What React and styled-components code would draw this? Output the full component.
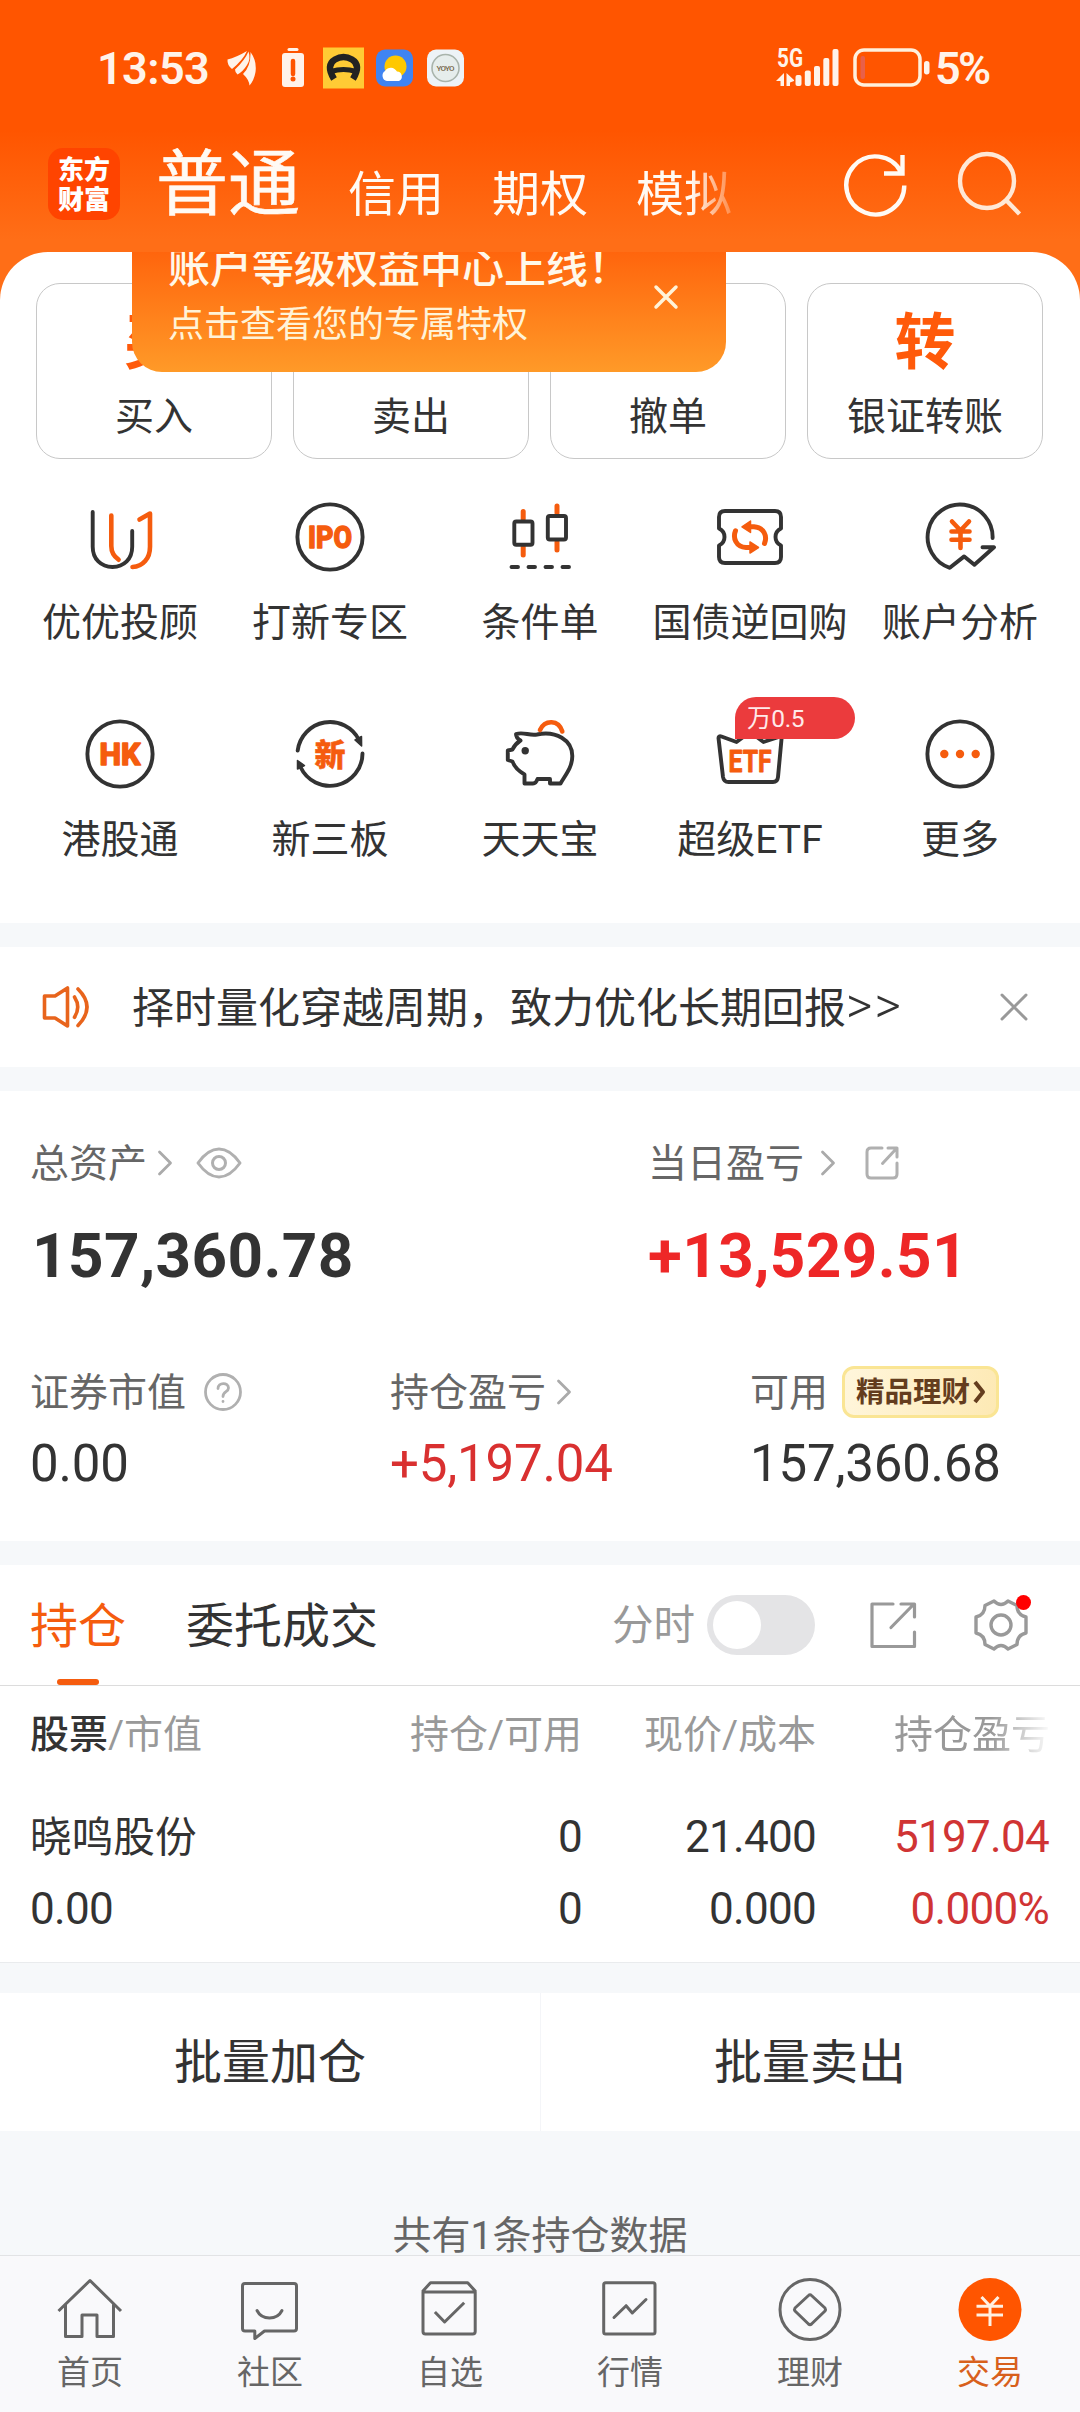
import React from "react";
import styled, { createGlobalStyle } from "styled-components";

const INK = "#333333";
const ORANGE = "#f55c0e";

const Global = createGlobalStyle`
  * { box-sizing: border-box; }
  body {
    margin: 0;
    background: #f6f8fa;
    font-family: Roboto, "Noto Sans CJK SC", sans-serif;
    color: #333;
  }
  svg { display: block; flex: none; overflow: visible; }
`;

const Page = styled.div`
  width: 1080px;
  height: 2412px;
  display: flex;
  flex-direction: column;
  overflow: hidden;
`;

/* ---------- header ---------- */
const Hero = styled.section`
  background: linear-gradient(#ff5500 0, #ff5500 130px, #ff6e17 240px);
`;

const StatusBar = styled.div`
  height: 136px;
  padding: 0 91px 0 97px;
  display: flex;
  align-items: center;
  justify-content: space-between;
  color: #fff3ea;
`;

const StatusGroup = styled.div`
  display: flex;
  align-items: center;
`;

const Clock = styled.span`
  width: 130px;
  font-size: 45px;
  font-weight: 600;
  line-height: 50px;
  letter-spacing: -0.6px;
  padding-top: 1px;
`;

const Percent = styled.span`
  font-size: 45px;
  font-weight: 600;
  line-height: 50px;
  width: 54px;
  margin-left: 5px;
  padding-top: 1px;
  letter-spacing: -2.6px;
`;

const TopNav = styled.div`
  height: 116px;
  padding: 0 58px 20px 48px;
  display: flex;
  align-items: center;
`;

const Logo = styled.div`
  width: 72px;
  height: 72px;
  border-radius: 15px;
  background: #ff4400;
  color: #fff;
  font-family: "Noto Sans CJK SC", sans-serif;
  font-weight: 900;
  font-size: 26px;
  line-height: 30px;
  text-align: center;
  padding-top: 5px;
`;

const TabStrip = styled.div`
  width: 584px;
  margin-left: 36px;
  display: flex;
  align-items: center;
  gap: 48px;
  overflow: hidden;
  mask-image: linear-gradient(90deg, #000 535px, transparent 590px);
`;

const TopTab = styled.span`
  flex: none;
  color: #fffaf4;
  font-size: ${(p) => (p.$active ? 72 : 48)}px;
  font-weight: 400;
  -webkit-text-stroke: ${(p) => (p.$active ? "0.6px #fffaf4" : "0")};
  line-height: 84px;
  padding-top: ${(p) => (p.$active ? 2 : 22)}px;
`;

const HeadIcons = styled.div`
  margin-left: 104px;
  display: flex;
  gap: 50px;
`;

/* ---------- main card ---------- */
const Card = styled.div`
  position: relative;
  height: 671px;
  padding-top: 31px;
  background: #fff;
  border-radius: 48px 48px 0 0;
`;

const Actions = styled.div`
  display: grid;
  grid-template-columns: repeat(4, 236px);
  gap: 21px;
  padding: 0 36px;
`;

const Action = styled.div`
  height: 176px;
  border: 1px solid #c8c8c8;
  border-radius: 24px;
  display: flex;
  flex-direction: column;
  align-items: center;
  padding-top: 21px;
`;

const ActionGlyph = styled.span`
  font-size: 61px;
  font-weight: 700;
  line-height: 76px;
  color: #ff5a0a;
`;

const Label = styled.span`
  font-size: 39px;
  line-height: 50px;
  white-space: nowrap;
`;

const ActionLabel = styled(Label)`
  margin-top: 11px;
`;

const Banner = styled.div`
  position: absolute;
  top: 0;
  left: 132px;
  width: 594px;
  height: 120px;
  overflow: hidden;
  padding: 0 0 0 36px;
  border-radius: 0 0 30px 30px;
  background: linear-gradient(#ff650d, #ff9a28);
  color: #fff8ea;
`;

const BannerTitle = styled.div`
  margin-top: -11px;
  font-size: 42px;
  font-weight: 500;
  line-height: 56px;
`;

const BannerText = styled.div`
  font-size: 36px;
  line-height: 56px;
  color: #fff3d8;
`;

const BannerClose = styled.svg`
  position: absolute;
  left: 522px;
  top: 33px;
`;

const Functions = styled.div`
  display: grid;
  grid-template-columns: repeat(5, 210px);
  row-gap: 71px;
  padding: 42px 15px 0;
`;

const Fn = styled.div`
  position: relative;
  display: flex;
  flex-direction: column;
  align-items: center;
  gap: 25px;
  height: 146px;
`;

const FnBadge = styled.span`
  position: absolute;
  left: 90px;
  top: -21px;
  width: 120px;
  height: 42px;
  padding-left: 12px;
  border-radius: 21px 21px 21px 0;
  background: #eb3b3d;
  color: #ffeaea;
  font-size: 24.5px;
  line-height: 43px;
  letter-spacing: -0.3px;
`;

/* ---------- notice ---------- */
const Notice = styled.section`
  height: 120px;
  margin-top: 24px;
  padding: 0 52px 0 42px;
  background: #fff;
  display: flex;
  align-items: center;
`;

const NoticeText = styled.span`
  flex: 1;
  margin-left: 42px;
  padding-top: 3px;
  font-size: 42px;
  line-height: 60px;
`;

const More = styled.span`
  font-size: 51px;
  font-weight: 300;
  letter-spacing: 2px;
  line-height: 50px;
`;

/* ---------- assets ---------- */
const Assets = styled.section`
  height: 450px;
  margin-top: 24px;
  padding: 42px 0 0 30px;
  background: #fff;
`;

const AssetTop = styled.div`
  display: grid;
  grid-template-columns: 618px 1fr;
  margin-bottom: 67px;
`;

const AssetBottom = styled.div`
  display: grid;
  grid-template-columns: 360px 360px 1fr;
`;

const AssetHead = styled.div`
  height: 60px;
  display: flex;
  align-items: center;
  font-size: 39px;
  color: #666;
`;

const HeadText = styled.span`
  line-height: 58px;
  padding-top: 2px;
`;

const Total = styled.div`
  height: 80px;
  margin-top: 22px;
  padding-left: ${(p) => (p.$up ? 0 : 2)}px;
  padding-top: 1px;
  font-size: 62px;
  font-weight: 700;
  line-height: 80px;
  letter-spacing: 0.4px;
  color: ${(p) => (p.$up ? "#ee2727" : INK)};
`;

const Amount = styled.div`
  margin-top: 12px;
  font-size: 51px;
  line-height: 60px;
  letter-spacing: -0.2px;
  color: ${(p) => (p.$up ? "#d93030" : INK)};
`;

const Gap = styled.span`
  flex: none;
  width: ${(p) => p.$w}px;
`;

const GoldTag = styled.span`
  width: 157px;
  height: 52px;
  margin-left: 14px;
  padding-left: 11px;
  display: flex;
  align-items: center;
  gap: 4px;
  border: 3px solid #fae594;
  border-radius: 12px;
  background: linear-gradient(100deg, #fff6dc, #fde9b4);
  color: #643d1e;
  font-size: 28.5px;
  font-weight: 700;
  line-height: 46px;
`;

const GoldText = styled.span`
  padding-top: 2px;
`;

/* ---------- holdings ---------- */
const Holdings = styled.section`
  height: 397px;
  margin-top: 24px;
  background: #fff;
`;

const HoldBar = styled.div`
  height: 121px;
  padding: 0 51px 0 30px;
  border-bottom: 1px solid #dcdcdc;
  display: flex;
  align-items: center;
`;

const HoldTab = styled.span`
  height: 120px;
  margin-right: 60px;
  display: flex;
  flex-direction: column;
  align-items: center;
  font-size: 48px;
  line-height: 123px;
  color: ${(p) => (p.$active ? ORANGE : INK)};
  &::after {
    content: "";
    flex: none;
    width: 42px;
    height: 6px;
    margin-top: -9px;
    border-radius: 3px;
    background: ${(p) => (p.$active ? ORANGE : "transparent")};
  }
`;

const Muted = styled.span`
  margin-left: auto;
  padding-top: 2px;
  font-size: 41.5px;
  line-height: 60px;
  color: #999;
`;

const Toggle = styled.span`
  width: 108px;
  height: 60px;
  margin: 0 54px 0 12px;
  padding: 6px;
  border-radius: 30px;
  background: #e4e4e6;
  &::before {
    content: "";
    display: block;
    width: 48px;
    height: 48px;
    border-radius: 50%;
    background: #fff;
  }
`;

const Table = styled.div`
  display: grid;
  grid-template-columns: 352px 200px 234px 234px;
  grid-template-rows: 96px 18px 72px 72px;
  padding-left: 30px;
`;

const Th = styled.span`
  font-size: 39px;
  line-height: 99px;
  color: #999;
  white-space: nowrap;
  text-align: ${(p) => (p.$first ? "left" : "right")};
  b { font-weight: 500; color: ${INK}; }
`;

const ThFade = styled(Th)`
  overflow: hidden;
  padding-left: 78px;
  text-align: left;
  mask-image: linear-gradient(90deg, #000 175px, transparent 236px);
`;

const Spacer = styled.span`
  grid-column: 1 / -1;
`;

const Td = styled.span`
  font-size: 44px;
  line-height: 74px;
  letter-spacing: -0.7px;
  padding-right: ${(p) => (p.$up ? 1 : 0)}px;
  text-align: ${(p) => (p.$first ? "left" : "right")};
  color: ${(p) => (p.$up ? "#d03434" : INK)};
`;

const StockName = styled(Td)`
  font-size: 41.7px;
  line-height: 75px;
  letter-spacing: 0;
`;

const Batch = styled.section`
  height: 169px;
  padding-top: 30px;
  background: #f6f8fa;
  border-top: 1px solid #e9ebed;
  display: flex;
`;

const BatchButton = styled.div`
  width: 540px;
  background: #fff;
  text-align: center;
  font-size: 48px;
  line-height: 140px;
  & + & { box-shadow: inset 1px 0 #f4f5f8; }
`;

const Footnote = styled.div`
  height: 124px;
  padding-top: 86px;
  text-align: center;
  font-size: 39px;
  line-height: 38px;
  color: #666;
`;

const BottomNav = styled.nav`
  height: 157px;
  border-top: 1px solid #e2e3e5;
  background: #f9f9fb;
  display: grid;
  grid-template-columns: repeat(6, 1fr);
`;

const NavItem = styled.div`
  display: flex;
  flex-direction: column;
  align-items: center;
  padding-top: 21px;
  gap: 8px;
  font-size: 33px;
  line-height: 44px;
  color: ${(p) => (p.$active ? "#d8601c" : "#666")};
`;

/* ---------- icons ---------- */
const Svg = ({ w, h = w, sw = 4, c = INK, children, ...rest }) => (
  <svg width={w} height={h} viewBox={`0 0 ${w} ${h}`} fill="none" stroke={c} strokeWidth={sw}
    strokeLinecap="round" strokeLinejoin="round" {...rest}>{children}</svg>
);

const Glyph = ({ x = 36, y, size, len, children, weight = 700, sw = 1.4 }) => (
  <text x={x} y={y} fontSize={size} fontWeight={weight} textAnchor="middle" textLength={len}
    lengthAdjust="spacingAndGlyphs" fill={ORANGE} stroke={ORANGE} strokeWidth={sw}>{children}</text>
);

const Ring = () => <circle cx="36" cy="36" r="32.6" />;

const icons = {
  uu: (
    <>
      <path d="M8.7 11V45.7C8.7 58 17 66 28.5 66S48.2 58 48.2 45.7V30" />
      <g stroke={ORANGE} strokeWidth="4.6">
        <path d="M27.3 14.5V45C27.3 51.5 30 55.5 34.6 58.7" />
        <path d="M48.5 66C59 65.5 66 57.5 66 45.7V12.5L55.5 18.5" />
      </g>
    </>
  ),
  ipo: <><Ring /><Glyph y="47" size="31" len="44" weight="800">IPO</Glyph></>,
  candle: (
    <>
      <g stroke={ORANGE} strokeWidth="5">
        <path d="M19.2 10.5V18M19.2 46V54M53 5V12M53 41V49" />
      </g>
      <rect x="10.3" y="20.5" width="18.2" height="23.2" rx="2" />
      <rect x="43.8" y="15" width="18.2" height="23.5" rx="2" />
      <path d="M7.5 66H14M24.5 66H31M41.5 66H48M58.5 66H65" />
    </>
  ),
  ticket: (
    <>
      <path d="M11 10H61Q67 10 67 16V27.5Q61.5 30 61.5 36T67 44.5V56Q67 62 61 62H11Q5 62 5 56V44.5Q10.5 42 10.5 36T5 27.5V16Q5 10 11 10Z" />
      <g stroke={ORANGE} strokeWidth="5">
        <path d="M36 25.8H40C50 26.5 53.5 35 50.5 42.5" />
        <path d="M36 46.5H32C22 46 18.5 37 21.5 29.8" />
      </g>
      <g fill={ORANGE} stroke={ORANGE} strokeWidth="1.5">
        <path d="M28 25.8L36.5 20V31.5ZM44.5 46.5L36 41V52Z" />
      </g>
    </>
  ),
  analysis: (
    <>
      <path d="M68.6 37A32.5 32.5 0 1 0 25.8 66.8L40.2 55.4L50.4 63.7L70 46.3H58.5" />
      <path d="M28 20.5L36.5 29.5L45 20.5M36.5 30V47M27.5 30.5H45.5M27.5 38.8H45.5" stroke={ORANGE} strokeWidth="4.6" />
    </>
  ),
  hk: <><Ring /><Glyph y="47" size="31" len="41" weight="800">HK</Glyph></>,
  neo: (
    <>
      <path d="M3.7 32.5A32.5 32.5 0 0 1 65 22M68.5 35.5A32.5 32.5 0 0 1 6.5 49" />
      <path d="M67.6 28L61 22L67.5 18.5ZM3.5 42.5L3.5 51L10.5 47.5Z" fill={INK} strokeWidth="1.5" />
      <Glyph y="47.5" size="31" weight="900" sw="0.5">新</Glyph>
    </>
  ),
  pig: (
    <>
      <path d="M12 16C20 13.5 25 18 33 16.5C52 12.5 68.3 22 68.3 38C68.3 50 60.5 58 56.5 65.5H46V61H33.5Q32 65.5 29 65.5H20.5V56.5Q11 51 8.5 43.5L3.8 42V32.5L8.5 31.5Q11 26 16.5 22.5Q12 20 12 16Z" />
      <path d="M36 12C41 1.5 54.5 1.5 58.3 13.5" stroke={ORANGE} strokeWidth="4.6" />
      <circle cx="21.2" cy="32.7" r="3.7" fill={INK} stroke="none" />
    </>
  ),
  etf: (
    <>
      <path d="M4.5 20Q4.5 17.5 7.5 18.5L22.5 24L36 14L49.5 24L67.8 18L64 59Q63.5 64 59 64H14.5Q9.8 64 9 59Z" />
      <Glyph y="53.5" size="31" len="43" sw="0.9">ETF</Glyph>
    </>
  ),
  more: (
    <>
      <Ring />
      <g fill={ORANGE} stroke="none">
        <circle cx="20.3" cy="36" r="4.2" /><circle cx="36" cy="36" r="4.2" /><circle cx="51.7" cy="36" r="4.2" />
      </g>
    </>
  ),
};

const functions = [
  ["uu", "优优投顾"], ["ipo", "打新专区"], ["candle", "条件单"], ["ticket", "国债逆回购"], ["analysis", "账户分析"],
  ["hk", "港股通"], ["neo", "新三板"], ["pig", "天天宝"], ["etf", "超级ETF", "万0.5"], ["more", "更多"],
];

const actions = [["买", "买入"], ["卖", "卖出"], ["撤", "撤单"], ["转", "银证转账"]];

const navIcons = {
  home: <><path d="M1.5 34L33 3.5L64 34" strokeLinecap="butt" /><path d="M8.5 28V59.5H25V38H40V59.5H56.5V28" /></>,
  talk: <><path d="M8 6.5H57Q59.5 6.5 59.5 9V51.5Q59.5 54 57 54H27.5L17.8 61.5V54H8Q5.5 54 5.5 51.5V9Q5.5 6.5 8 6.5Z" /><path d="M20 33.5C25 43.5 40 43.5 45 33.5" /></>,
  pick: <><path d="M6 15V54.5Q6 57 8.5 57H55.7Q58.2 57 58.2 54.5V15ZM6 14L13.5 5.7H50.7L58.2 14" /><path d="M17.9 35L27.6 45L47.2 25.7" strokeLinecap="butt" /></>,
  chart: <><rect x="6.7" y="5.7" width="51.3" height="51.3" rx="2" /><path d="M17 40.5L29.1 28.7L35.3 36L49 22.5" /></>,
  wealth: <><circle cx="33" cy="32.5" r="30" /><path d="M31.5 18.5L18 31Q17 32.5 18 34L31.5 47Q33 48.3 34.5 47L48 34Q49 32.5 48 31L34.5 18.5Q33 17 31.5 18.5Z" /></>,
  trade: <><circle cx="33" cy="32.5" r="31.5" fill="#ff5500" stroke="none" /><path d="M24.5 20L33 29L41.5 20M33 29V49M19.5 29.3H46M19.5 38H46" stroke="#fff0e2" strokeLinecap="butt" /></>,
};

const navItems = [
  ["home", "首页"], ["talk", "社区"], ["pick", "自选"], ["chart", "行情"], ["wealth", "理财"], ["trade", "交易"],
];

const Chevron = () => <Svg w={14} h={24} sw={2.8} c="#aaa"><path d="M1.5 1L12.5 12L1.5 23" /></Svg>;

const StatusIcons = () => (
  <Svg w={238} h={42} c="none">
    <g fill="#fff3ea">
      <path d="M0.5 12.5Q9 10.5 20 4Q16 13 5 22Q0 18 0.5 12.5Z" />
      <path d="M8 22.5Q18 13 21.5 4.5Q24 12 20 18Q16 24.5 10.5 27.5Q8 25.5 8 22.5Z" />
      <path d="M16 27Q24 19 23.5 5Q30 14 28.5 25Q27 33.5 22.5 38.5Q22 32.5 16 27Z" />
      <rect x="55" y="6" width="22" height="34" rx="3" />
      <rect x="60.5" y="1" width="11" height="3" rx="1.5" />
    </g>
    <path d="M66 14V27" stroke="#ff5500" strokeWidth="4.5" />
    <circle cx="66" cy="32" r="2.5" fill="#ff5500" />
    <rect x="96" y="0.5" width="41" height="41" fill="#ffcb35" />
    <path d="M107 32Q98.5 18 108 12.5Q116.5 7.5 125 12.5Q134.5 18 126 32" stroke="#222" strokeWidth="6.5" strokeLinecap="butt" />
    <path d="M104 24.5Q116.5 20.5 129 24.5" stroke="#222" strokeWidth="5" />
    <rect x="149" y="2.5" width="37" height="37" rx="9" fill="#3f84f2" />
    <circle cx="168.5" cy="19.5" r="11" fill="#ffc800" />
    <path d="M160 34A5.5 5.5 0 0 1 158 24A7 7 0 0 1 170 24.5A5 5 0 0 1 172 34Z" fill="#fff" />
    <rect x="200" y="2.5" width="37" height="37" rx="9" fill="#edf3f7" />
    <circle cx="218.5" cy="21" r="13.5" fill="#e6edec" stroke="#a9b4ac" strokeWidth="1.6" />
    <text x="218.5" y="24" fontSize="8" fontWeight="500" textAnchor="middle" textLength="18" fill="#75664a">YOYO</text>
  </Svg>
);

const SignalIcons = () => (
  <Svg w={154} h={42} c="none">
    <text x="1" y="20" fontSize="26" fontWeight="700" textLength="26" lengthAdjust="spacingAndGlyphs" fill="#fff3ea">5G</text>
    <g fill="#fff3ea">
      <path d="M0 34L8 26V39H4.5V34ZM10.5 26L18 33V34L14 35.5V39H10.5Z" />
      <rect x="19.5" y="28" width="6" height="11" rx="2" />
      <rect x="28.8" y="23.5" width="6" height="15.5" rx="2" />
      <rect x="38" y="19" width="6" height="20" rx="2" />
      <rect x="47.3" y="11" width="6" height="28" rx="2" />
      <rect x="56.5" y="2" width="6" height="37" rx="2" />
      <rect x="148" y="14" width="5.5" height="13.5" rx="2.7" />
    </g>
    <rect x="79" y="3" width="65" height="35" rx="9" stroke="#fff0dc" strokeWidth="3.5" />
    <rect x="84.5" y="9" width="4.5" height="23" rx="2" fill="#e8604a" />
  </Svg>
);

export default function App() {
  return (
    <>
      <Global />
      <Page>
        <Hero>
          <StatusBar>
            <StatusGroup><Clock>13:53</Clock><StatusIcons /></StatusGroup>
            <StatusGroup><SignalIcons /><Percent>5%</Percent></StatusGroup>
          </StatusBar>
          <TopNav>
            <Logo>东方<br />财富</Logo>
            <TabStrip>
              <TopTab $active>普通</TopTab>
              <TopTab>信用</TopTab>
              <TopTab>期权</TopTab>
              <TopTab>模拟</TopTab>
            </TabStrip>
            <HeadIcons>
              <Svg w={64} c="#fffaf4" sw={4.4} strokeLinecap="butt" strokeLinejoin="miter">
                <path d="M60.3 33.5A29 29 0 1 1 57 20M58.5 3V21.5H40" />
              </Svg>
              <Svg w={64} c="#ffe8d6" sw={4.4} strokeLinecap="butt">
                <circle cx="29" cy="29" r="27" /><path d="M47.5 47.5L61.5 62" />
              </Svg>
            </HeadIcons>
          </TopNav>
          <Card>
            <Actions>
              {actions.map(([g, t]) => (
                <Action key={t}><ActionGlyph>{g}</ActionGlyph><ActionLabel>{t}</ActionLabel></Action>
              ))}
            </Actions>
            <Functions>
              {functions.map(([id, t, badge]) => (
                <Fn key={id}>
                  <Svg w={72} sw={3.9}>{icons[id]}</Svg>
                  <Label>{t}</Label>
                  {badge && <FnBadge>{badge}</FnBadge>}
                </Fn>
              ))}
            </Functions>
            <Banner>
              <BannerTitle>账户等级权益中心上线！</BannerTitle>
              <BannerText>点击查看您的专属特权</BannerText>
              <BannerClose width="24" height="24" fill="none" stroke="#fff3d8" strokeWidth="3.5" strokeLinecap="round">
                <path d="M2 2L22 22M22 2L2 22" />
              </BannerClose>
            </Banner>
          </Card>
        </Hero>

        <Notice>
          <Svg w={48} h={42} sw={3.6} c="#e8641c">
            <path d="M2.5 10H13L25.5 2V40L13 32H2.5ZM32.5 11Q39 21 32.5 31.3M36 3Q54 21 36 39.5" />
          </Svg>
          <NoticeText>择时量化穿越周期，致力优化长期回报<More>&gt;&gt;</More></NoticeText>
          <Svg w={28} sw={3} c="#999"><path d="M2 2L26 26M26 2L2 26" /></Svg>
        </Notice>

        <Assets>
          <AssetTop>
            <div>
              <AssetHead>
                <HeadText>总资产</HeadText><Gap $w={11} /><Chevron /><Gap $w={24} />
                <Svg w={46} h={32} sw={3} c="#b0b0b0">
                  <path d="M2 16Q12 2 23 2T44 16Q34 30 23 30T2 16Z" /><circle cx="23" cy="16" r="6.5" />
                </Svg>
              </AssetHead>
              <Total>157,360.78</Total>
            </div>
            <div>
              <AssetHead>
                <HeadText>当日盈亏</HeadText><Gap $w={17} /><Chevron /><Gap $w={30} />
                <Svg w={34} sw={3} c="#b0b0b0">
                  <path d="M17 2H6Q2 2 2 6V28Q2 32 6 32H28Q32 32 32 28V17M23 2H32V11M31 3L17.5 17.5" />
                </Svg>
              </AssetHead>
              <Total $up>+13,529.51</Total>
            </div>
          </AssetTop>
          <AssetBottom>
            <div>
              <AssetHead>
                <HeadText>证券市值</HeadText><Gap $w={18} />
                <Svg w={38} sw={2.8} c="#b0b0b0">
                  <circle cx="19" cy="19" r="17.5" />
                  <path d="M14 15.5C14 9 24.5 9 24.5 15C24.5 19 19 18.5 19 23.5M19 28.3V28.6" />
                </Svg>
              </AssetHead>
              <Amount>0.00</Amount>
            </div>
            <div>
              <AssetHead><HeadText>持仓盈亏</HeadText><Gap $w={11} /><Chevron /></AssetHead>
              <Amount $up>+5,197.04</Amount>
            </div>
            <div>
              <AssetHead>
                <HeadText>可用</HeadText>
                <GoldTag>
                  <GoldText>精品理财</GoldText>
                  <Svg w={11} h={22} sw={4} c="#643d1e" strokeLinecap="butt"><path d="M1 1L9 11L1 21" /></Svg>
                </GoldTag>
              </AssetHead>
              <Amount>157,360.68</Amount>
            </div>
          </AssetBottom>
        </Assets>

        <Holdings>
          <HoldBar>
            <HoldTab $active>持仓</HoldTab>
            <HoldTab>委托成交</HoldTab>
            <Muted>分时</Muted>
            <Toggle />
            <Svg w={48} sw={3.2} c="#999">
              <path d="M24 3H3V45.5H45.5V31M32 3H45.5V16M44 4L22 26.5" />
            </Svg>
            <Gap $w={56} />
            <Svg w={56} sw={3.4} c="#999">
              <path d="M21 4Q28 11 35 4L44 8.5Q44 18 53 20V36Q44 38 44 47.5L35 52Q28 45 21 52L12 47.5Q12 38 3 36V20Q12 18 12 8.5Z" />
              <circle cx="28" cy="28" r="10" />
              <circle cx="50.5" cy="5.5" r="7.5" fill="#ff0000" stroke="none" />
            </Svg>
          </HoldBar>
          <Table>
            <Th $first><b>股票</b>/市值</Th>
            <Th>持仓/可用</Th>
            <Th>现价/成本</Th>
            <ThFade>持仓盈亏</ThFade>
            <Spacer />
            <StockName $first>晓鸣股份</StockName>
            <Td>0</Td>
            <Td>21.400</Td>
            <Td $up>5197.04</Td>
            <Td $first>0.00</Td>
            <Td>0</Td>
            <Td>0.000</Td>
            <Td $up>0.000%</Td>
          </Table>
        </Holdings>

        <Batch>
          <BatchButton>批量加仓</BatchButton>
          <BatchButton>批量卖出</BatchButton>
        </Batch>
        <Footnote>共有1条持仓数据</Footnote>

        <BottomNav>
          {navItems.map(([id, t]) => (
            <NavItem key={id} $active={id === "trade"}>
              <Svg w={66} sw={3} c="#666">{navIcons[id]}</Svg>
              {t}
            </NavItem>
          ))}
        </BottomNav>
      </Page>
    </>
  );
}
